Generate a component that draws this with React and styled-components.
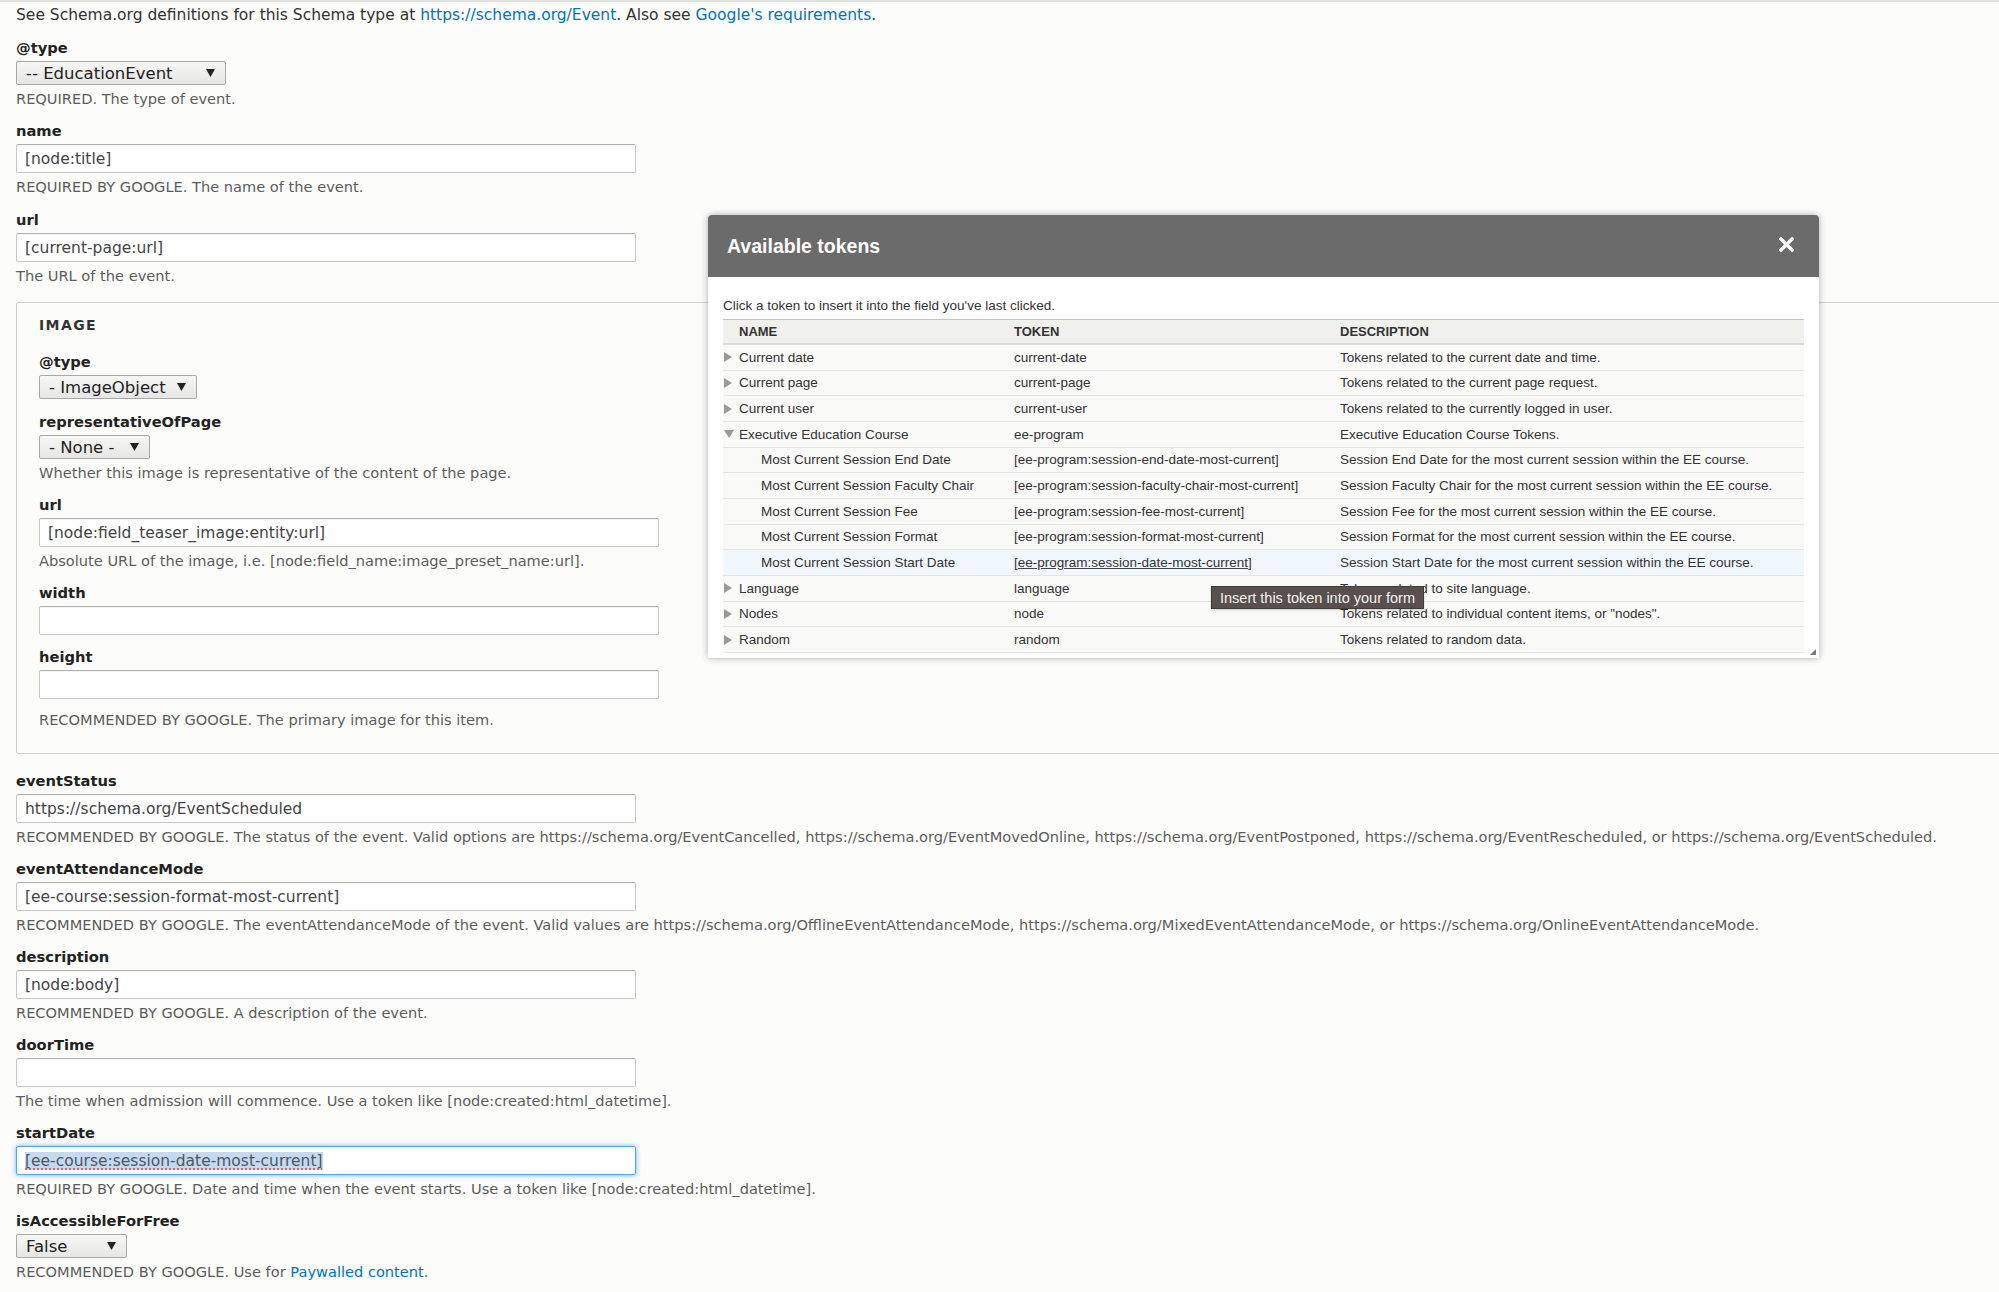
import React from "react";
import styled, { createGlobalStyle } from "styled-components";

const GlobalStyle = createGlobalStyle`
  html, body {
    margin: 0;
    padding: 0;
    background: #fcfcfa;
    overflow: hidden;
  }
  body {
    font-family: "DejaVu Sans", "Liberation Sans", sans-serif;
    color: #333;
  }
`;

const tokenRows = [
  { name: "Current date", token: "current-date", desc: "Tokens related to the current date and time.", arrow: "right" },
  { name: "Current page", token: "current-page", desc: "Tokens related to the current page request.", arrow: "right" },
  { name: "Current user", token: "current-user", desc: "Tokens related to the currently logged in user.", arrow: "right" },
  { name: "Executive Education Course", token: "ee-program", desc: "Executive Education Course Tokens.", arrow: "down" },
  { name: "Most Current Session End Date", token: "[ee-program:session-end-date-most-current]", desc: "Session End Date for the most current session within the EE course.", child: true },
  { name: "Most Current Session Faculty Chair", token: "[ee-program:session-faculty-chair-most-current]", desc: "Session Faculty Chair for the most current session within the EE course.", child: true },
  { name: "Most Current Session Fee", token: "[ee-program:session-fee-most-current]", desc: "Session Fee for the most current session within the EE course.", child: true },
  { name: "Most Current Session Format", token: "[ee-program:session-format-most-current]", desc: "Session Format for the most current session within the EE course.", child: true },
  { name: "Most Current Session Start Date", token: "[ee-program:session-date-most-current]", desc: "Session Start Date for the most current session within the EE course.", child: true, hover: true },
  { name: "Language", token: "language", desc: "Tokens related to site language.", arrow: "right" },
  { name: "Nodes", token: "node", desc: 'Tokens related to individual content items, or "nodes".', arrow: "right" },
  { name: "Random", token: "random", desc: "Tokens related to random data.", arrow: "right" },
];

const Arrow = ({ dir }) =>
  dir === "down" ? (
    <svg width="10" height="8" viewBox="0 0 10 8">
      <path d="M0 0 L10 0 L5 8 Z" fill="#9a9a9a" />
    </svg>
  ) : (
    <svg width="8" height="10" viewBox="0 0 8 10">
      <path d="M0 0 L8 5 L0 10 Z" fill="#9a9a9a" />
    </svg>
  );

const Select = ({ label, width }) => (
  <SelectBox $width={width}>
    <span>{label}</span>
    <svg width="9" height="8" viewBox="0 0 9 8">
      <path d="M0 0 L9 0 L4.5 8 Z" fill="#222" />
    </svg>
  </SelectBox>
);

const TokenDialog = () => (
  <Dialog>
    <DialogHeader>
      <DialogTitle>Available tokens</DialogTitle>
      <CloseButton aria-label="Close">
        <svg width="15" height="15" viewBox="0 0 15 15">
          <path d="M2 2 L13 13 M13 2 L2 13" stroke="#fff" strokeWidth="3.4" strokeLinecap="square" />
        </svg>
      </CloseButton>
    </DialogHeader>
    <DialogBody>
      <Hint>Click a token to insert it into the field you've last clicked.</Hint>
      <Table>
        <HeadRow>
          <HeadCell $first>NAME</HeadCell>
          <HeadCell>TOKEN</HeadCell>
          <HeadCell>DESCRIPTION</HeadCell>
        </HeadRow>
        {tokenRows.map((row) => (
          <Row key={row.name} $hover={row.hover}>
            <NameCell $child={row.child}>
              {row.arrow && (
                <ArrowSlot>
                  <Arrow dir={row.arrow} />
                </ArrowSlot>
              )}
              {row.name}
            </NameCell>
            <Cell>
              {row.hover ? (
                <>
                  [<u>{row.token.slice(1, -1)}</u>]
                </>
              ) : (
                row.token
              )}
            </Cell>
            <Cell>{row.desc}</Cell>
          </Row>
        ))}
      </Table>
      <ResizeHandle />
    </DialogBody>
    <Tooltip>Insert this token into your form</Tooltip>
  </Dialog>
);

export default function App() {
  return (
    <Page>
      <GlobalStyle />
      <Intro>
        See Schema.org definitions for this Schema type at <Link>https://schema.org/Event</Link>. Also see{" "}
        <Link>Google's requirements</Link>.
      </Intro>

      <Item>
        <Label>@type</Label>
        <Select label="-- EducationEvent" width={210} />
        <Help>REQUIRED. The type of event.</Help>
      </Item>

      <Item $space={14}>
        <Label>name</Label>
        <Input>[node:title]</Input>
        <Help>REQUIRED BY GOOGLE. The name of the event.</Help>
      </Item>

      <Item $space={12}>
        <Label>url</Label>
        <Input>[current-page:url]</Input>
        <Help>The URL of the event.</Help>
      </Item>

      <Fieldset>
        <Legend>IMAGE</Legend>
        <Item>
          <Label>@type</Label>
          <Select label="- ImageObject" width={158} />
        </Item>
        <Item>
          <Label>representativeOfPage</Label>
          <Select label="- None -" width={111} />
          <Help>Whether this image is representative of the content of the page.</Help>
        </Item>
        <Item>
          <Label>url</Label>
          <Input>[node:field_teaser_image:entity:url]</Input>
          <Help>Absolute URL of the image, i.e. [node:field_name:image_preset_name:url].</Help>
        </Item>
        <Item $space={12}>
          <Label>width</Label>
          <Input />
        </Item>
        <Item $space={12}>
          <Label>height</Label>
          <Input />
        </Item>
        <FieldsetHelp>RECOMMENDED BY GOOGLE. The primary image for this item.</FieldsetHelp>
      </Fieldset>

      <Item>
        <Label>eventStatus</Label>
        <Input>https://schema.org/EventScheduled</Input>
        <Help>
          RECOMMENDED BY GOOGLE. The status of the event. Valid options are https://schema.org/EventCancelled,
          https://schema.org/EventMovedOnline, https://schema.org/EventPostponed, https://schema.org/EventRescheduled,
          or https://schema.org/EventScheduled.
        </Help>
      </Item>

      <Item>
        <Label>eventAttendanceMode</Label>
        <Input>[ee-course:session-format-most-current]</Input>
        <Help>
          RECOMMENDED BY GOOGLE. The eventAttendanceMode of the event. Valid values are
          https://schema.org/OfflineEventAttendanceMode, https://schema.org/MixedEventAttendanceMode, or
          https://schema.org/OnlineEventAttendanceMode.
        </Help>
      </Item>

      <Item>
        <Label>description</Label>
        <Input>[node:body]</Input>
        <Help>RECOMMENDED BY GOOGLE. A description of the event.</Help>
      </Item>

      <Item>
        <Label>doorTime</Label>
        <Input />
        <Help>The time when admission will commence. Use a token like [node:created:html_datetime].</Help>
      </Item>

      <Item>
        <Label>startDate</Label>
        <Input $focused>
          <Selected>[ee-course:session-date-most-current]</Selected>
        </Input>
        <Help>
          REQUIRED BY GOOGLE. Date and time when the event starts. Use a token like [node:created:html_datetime].
        </Help>
      </Item>

      <Item>
        <Label>isAccessibleForFree</Label>
        <Select label="False" width={111} />
        <Help>
          RECOMMENDED BY GOOGLE. Use for <Link>Paywalled content</Link>.
        </Help>
      </Item>

      <TokenDialog />
    </Page>
  );
}

const Page = styled.div`
  position: relative;
  min-height: 1292px;
  box-sizing: border-box;
  border-top: 2px solid #e2e2e0;
  padding: 3px 0 0 16px;
  overflow: hidden;
`;

const Intro = styled.div`
  font-size: 15.5px;
  line-height: 20px;
  color: #333;
  margin-bottom: 13px;
  white-space: nowrap;
`;

const Link = styled.a`
  color: #0074bd;
  text-decoration: none;
`;

const Item = styled.div`
  margin-bottom: ${(p) => p.$space ?? 13}px;
`;

const Label = styled.div`
  font-size: 14.7px;
  font-weight: bold;
  line-height: 20px;
  color: #222;
  margin-bottom: 3px;
`;

const Help = styled.div`
  font-size: 14.6px;
  line-height: 18px;
  color: #5c5c5c;
  margin-top: 5px;
  white-space: nowrap;
`;

const Input = styled.div`
  box-sizing: border-box;
  width: 620px;
  height: 29px;
  display: flex;
  align-items: center;
  padding: 0 8px;
  background: #fff;
  border: 1px solid ${(p) => (p.$focused ? "#52a8ec" : "#c8c8c6")};
  border-top-color: ${(p) => (p.$focused ? "#52a8ec" : "#b0b0ae")};
  border-radius: 2px;
  box-shadow: ${(p) => (p.$focused ? "0 0 5px rgba(60, 150, 255, 0.75)" : "inset 0 1px 1px rgba(0,0,0,0.04)")};
  font-size: 15.5px;
  color: #444;
  white-space: nowrap;
`;

const Selected = styled.span`
  background: #c3daf5;
  color: #555;
  text-decoration: underline dotted #e0403c;
  text-underline-offset: 3px;
`;

const SelectBox = styled.div`
  box-sizing: border-box;
  width: ${(p) => p.$width}px;
  height: 24px;
  display: flex;
  align-items: center;
  justify-content: space-between;
  padding: 0 10px 0 9px;
  border: 1px solid #a8a8a6;
  border-radius: 2px;
  background: linear-gradient(#f7f7f5, #e6e6e4);
  font-size: 16.5px;
  color: #222;
  white-space: nowrap;
`;

const Fieldset = styled.div`
  box-sizing: border-box;
  margin: 17px -60px 17px 0;
  padding: 12px 0 24px 22px;
  border: 1px solid #cfcfcd;
  border-radius: 2px;
`;

const Legend = styled.div`
  font-size: 14px;
  font-weight: bold;
  letter-spacing: 1.4px;
  line-height: 20px;
  color: #333;
  margin-bottom: 17px;
`;

const FieldsetHelp = styled(Help)`
  margin-top: 4px;
`;

const Dialog = styled.div`
  position: absolute;
  left: 708px;
  top: 213px;
  width: 1111px;
  background: #fff;
  border-radius: 4px 4px 0 0;
  box-shadow: 0 0 7px rgba(0, 0, 0, 0.32);
  font-family: "Liberation Sans", Arial, sans-serif;
`;

const DialogHeader = styled.div`
  height: 62px;
  display: flex;
  align-items: center;
  justify-content: space-between;
  padding: 0 25px 0 19px;
  background: #6b6b6b;
  border-radius: 4px 4px 0 0;
`;

const DialogTitle = styled.div`
  font-size: 19.5px;
  font-weight: bold;
  color: #fff;
`;

const CloseButton = styled.button`
  display: flex;
  padding: 0;
  border: 0;
  background: none;
  margin-top: -4px;
`;

const DialogBody = styled.div`
  position: relative;
  padding: 21px 15px 5px 15px;
`;

const Hint = styled.div`
  font-size: 13.5px;
  line-height: 16px;
  color: #333;
  margin-bottom: 5px;
`;

const Table = styled.div`
  font-size: 13.5px;
  color: #333;
`;

const HeadRow = styled.div`
  display: grid;
  grid-template-columns: 283px 326px 1fr;
  align-items: center;
  height: 26px;
  box-sizing: border-box;
  background: #f0f0ed;
  border-top: 1px solid #c4c4c2;
  border-bottom: 2px solid #dcdcda;
`;

const HeadCell = styled.div`
  padding-left: ${(p) => (p.$first ? "16px" : "8px")};
  font-weight: bold;
  font-size: 13px;
  color: #333;
`;

const Row = styled.div`
  display: grid;
  grid-template-columns: 283px 326px 1fr;
  align-items: center;
  height: 25.67px;
  box-sizing: border-box;
  background: ${(p) => (p.$hover ? "#f1f7fc" : "#f9f9f8")};
  border-bottom: 1px solid #e4e4e2;
  white-space: nowrap;
`;

const Cell = styled.div`
  padding-left: 8px;

  u {
    text-decoration-color: #444;
  }
`;

const NameCell = styled.div`
  position: relative;
  padding-left: ${(p) => (p.$child ? "38px" : "16px")};
`;

const ArrowSlot = styled.span`
  position: absolute;
  left: 1px;
  top: 50%;
  transform: translateY(-50%);
  display: flex;
`;

const ResizeHandle = styled.div`
  position: absolute;
  right: 3px;
  bottom: 3px;
  width: 0;
  height: 0;
  border-left: 6px solid transparent;
  border-bottom: 6px solid #777;
`;

const Tooltip = styled.div`
  position: absolute;
  left: 503px;
  top: 371px;
  height: 23px;
  box-sizing: border-box;
  display: flex;
  align-items: center;
  padding: 0 8px;
  background: #57504d;
  border: 1px solid #433d3a;
  color: #f4f4f4;
  font-size: 14.5px;
  white-space: nowrap;
  box-shadow: 0 1px 2px rgba(0, 0, 0, 0.2);
`;
